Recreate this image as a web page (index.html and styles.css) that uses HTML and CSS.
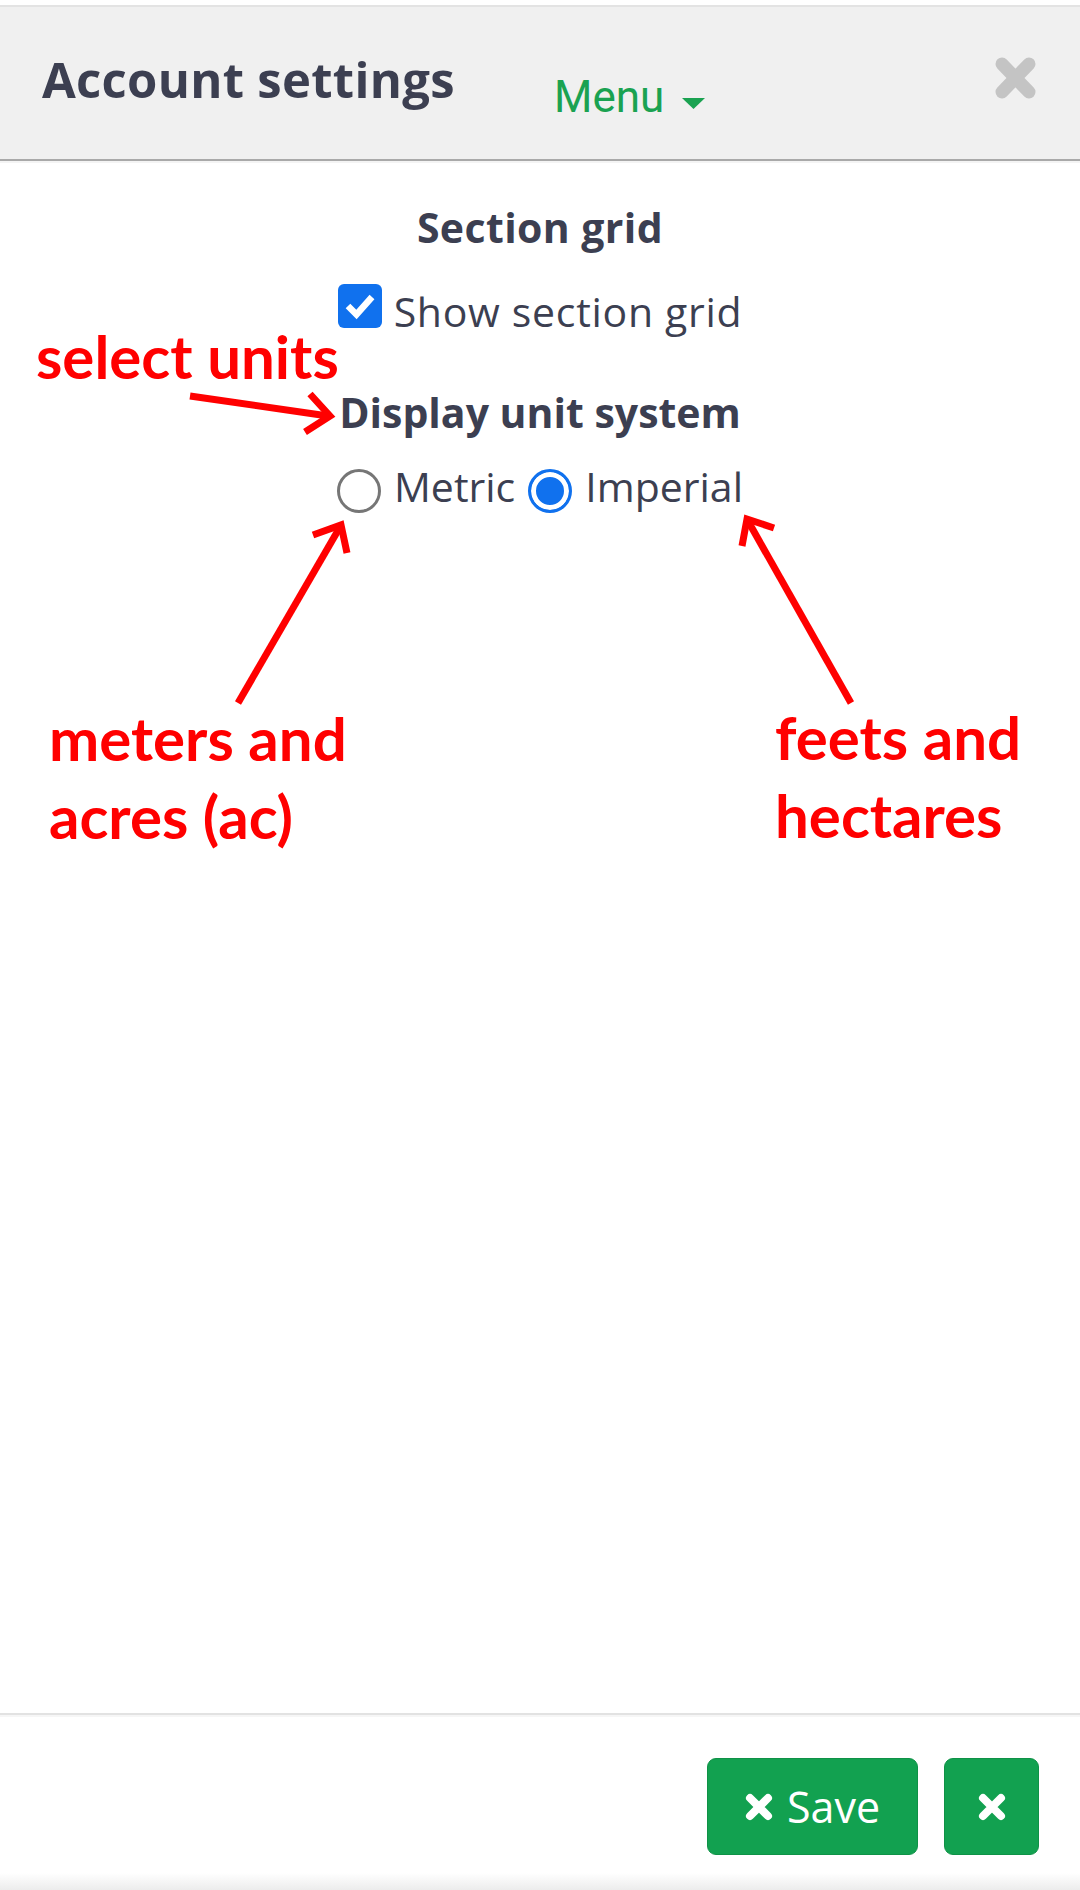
FILE: index.html
```html
<!DOCTYPE html>
<html lang="en">
<head>
    <meta charset="UTF-8">
    <meta name="viewport" content="width=device-width, initial-scale=1.0">
    <title>Account settings</title>
    <link rel="stylesheet" href="styles.css">
</head>
<body>
    <div class="page">
        <header class="topbar">
            <h1 class="title">Account settings</h1>
            <a class="menu" href="#">Menu
                <svg class="caret" width="23" height="11" viewBox="0 0 23 11"><path d="M0 0 H23 L11.5 11 Z" fill="currentColor"/></svg>
            </a>
            <span></span>
            <button class="close" type="button">
                <svg width="43" height="44" viewBox="0 0 43 44"><path d="M8 8 L35 36 M35 8 L8 36" stroke="#c4c4c4" stroke-width="13" stroke-linecap="round"/></svg>
            </button>
        </header>

        <main class="settings">
            <h2 class="group-title">Section grid</h2>
            <label class="check-row">
                <span class="checkbox">
                    <svg width="44" height="44" viewBox="0 0 44 44"><path d="M10 22 L18.5 30.5 L34 13" fill="none" stroke="#fff" stroke-width="6.5"/></svg>
                </span>
                <span class="opt-label">Show section grid</span>
            </label>

            <h2 class="group-title units-title">Display unit system</h2>
            <div class="radio-row">
                <label class="radio-opt"><span class="radio"></span><span class="opt-label">Metric</span></label>
                <label class="radio-opt"><span class="radio checked"></span><span class="opt-label">Imperial</span></label>
            </div>
        </main>

        <footer class="actions">
            <button class="btn btn-save" type="button">
                <svg width="28" height="28" viewBox="0 0 28 28"><path d="M5 5 L23 23 M23 5 L5 23" stroke="#fff" stroke-width="8" stroke-linecap="round"/></svg>
                Save
            </button>
            <button class="btn btn-icon" type="button">
                <svg width="28" height="28" viewBox="0 0 28 28"><path d="M5 5 L23 23 M23 5 L5 23" stroke="#fff" stroke-width="8" stroke-linecap="round"/></svg>
            </button>
        </footer>

        <!-- red notes drawn over the form -->
        <p class="note note-units">select units</p>
        <p class="note note-metric">meters and<br>acres (ac)</p>
        <p class="note note-imperial">feets and<br>hectares</p>
        <svg class="arrows" width="1080" height="1890" viewBox="0 0 1080 1890">
            <g fill="none" stroke="#ff0000" stroke-width="7">
                <path d="M190 396 L328 416"/>
                <path d="M310 394 L330 416 L305 432"/>
                <path d="M238 703 L340 527"/>
                <path d="M313 535 L341 525 L347 553"/>
                <path d="M851 703 L748 521"/>
                <path d="M742 546 L747 519 L774 528"/>
            </g>
        </svg>
    </div>
</body>
</html>
```

FILE: styles.css
```css
body {
    margin: 0;
    font-family: "Open Sans", "Noto Sans", sans-serif;
    color: #3c3f51;
    background: #fff;
}
.page {
    position: relative;
    width: 1080px;
    height: 1890px;
    display: flex;
    flex-direction: column;
    overflow: hidden;
}

/* header bar */
.topbar {
    margin-top: 5px;
    height: 152px;
    padding: 0 43px 0 42px;
    display: grid;
    grid-template-columns: 512px auto 1fr 43px;
    align-items: start;
    background: #f0f0f0;
    border-top: 2px solid #e3e3e3;
    border-bottom: 2px solid #a9a9a9;
    box-shadow: 0 2px 0 #f4f4f4;
}
.title {
    margin: 48px 0 0;
    font-size: 49px;
    font-weight: 700;
    line-height: 1;
    letter-spacing: 0.3px;
}
.menu {
    margin-top: 68px;
    display: flex;
    align-items: flex-start;
    gap: 18px;
    font-family: Roboto, sans-serif;
    font-size: 44px;
    line-height: 1;
    color: #1aa251;
    text-decoration: none;
}
.caret {
    margin-top: 23px;
}
.close {
    margin-top: 49px;
    padding: 0;
    border: none;
    background: none;
    line-height: 0;
}

/* form body */
.settings {
    flex: 1;
    display: flex;
    flex-direction: column;
    align-items: center;
    padding-top: 46px;
}
.group-title {
    margin: 0;
    font-size: 41px;
    font-weight: 700;
    line-height: 1;
    letter-spacing: 0.4px;
}
.units-title {
    margin-top: 60px;
    letter-spacing: 0;
}
.opt-label {
    font-size: 41px;
    line-height: 1;
}
.check-row {
    margin-top: 36px;
    display: flex;
    align-items: flex-start;
    gap: 12px;
}
.check-row .opt-label {
    margin-top: 7px;
    letter-spacing: 0.7px;
}
.checkbox {
    width: 44px;
    height: 44px;
    border-radius: 6px;
    background: #1071ee;
    line-height: 0;
}
.radio-row {
    margin-top: 33px;
    display: flex;
    align-items: flex-start;
    gap: 13px;
}
.radio-opt {
    display: flex;
    align-items: flex-start;
    gap: 13px;
}
.radio {
    margin-top: 3px;
    width: 44px;
    height: 44px;
    box-sizing: border-box;
    border: 3px solid #767676;
    border-radius: 50%;
    background: #fff;
}
.radio.checked {
    border-color: #1071ee;
    background: #1071ee;
    box-shadow: inset 0 0 0 5px #fff;
}

/* footer buttons */
.actions {
    box-sizing: border-box;
    height: 177px;
    padding: 43px 41px 0 0;
    display: flex;
    justify-content: flex-end;
    align-items: flex-start;
    gap: 26px;
    border-top: 2px solid #e2e2e2;
    box-shadow: inset 0 2px 0 #f6f6f6;
    background: linear-gradient(to bottom, #fff 0, #fff 158px, #ececec 175px);
}
.btn {
    height: 97px;
    padding: 0;
    display: flex;
    align-items: center;
    justify-content: center;
    gap: 14px;
    border: 1px solid #0f9247;
    border-radius: 9px;
    background: #12a150;
    color: #fff;
    font-family: "Open Sans", sans-serif;
    font-size: 43px;
    line-height: 1;
}
.btn-save {
    width: 211px;
}
.btn-icon {
    width: 95px;
}

/* red notes */
.note {
    position: absolute;
    margin: 0;
    font-family: Lato, sans-serif;
    font-weight: 700;
    font-size: 60px;
    line-height: 78px;
    color: #ff0000;
    white-space: nowrap;
}
.note-units {
    left: 36px;
    top: 317px;
}
.note-metric {
    left: 49px;
    top: 699px;
}
.note-imperial {
    left: 775px;
    top: 698px;
}
.arrows {
    position: absolute;
    left: 0;
    top: 0;
    pointer-events: none;
}
```
